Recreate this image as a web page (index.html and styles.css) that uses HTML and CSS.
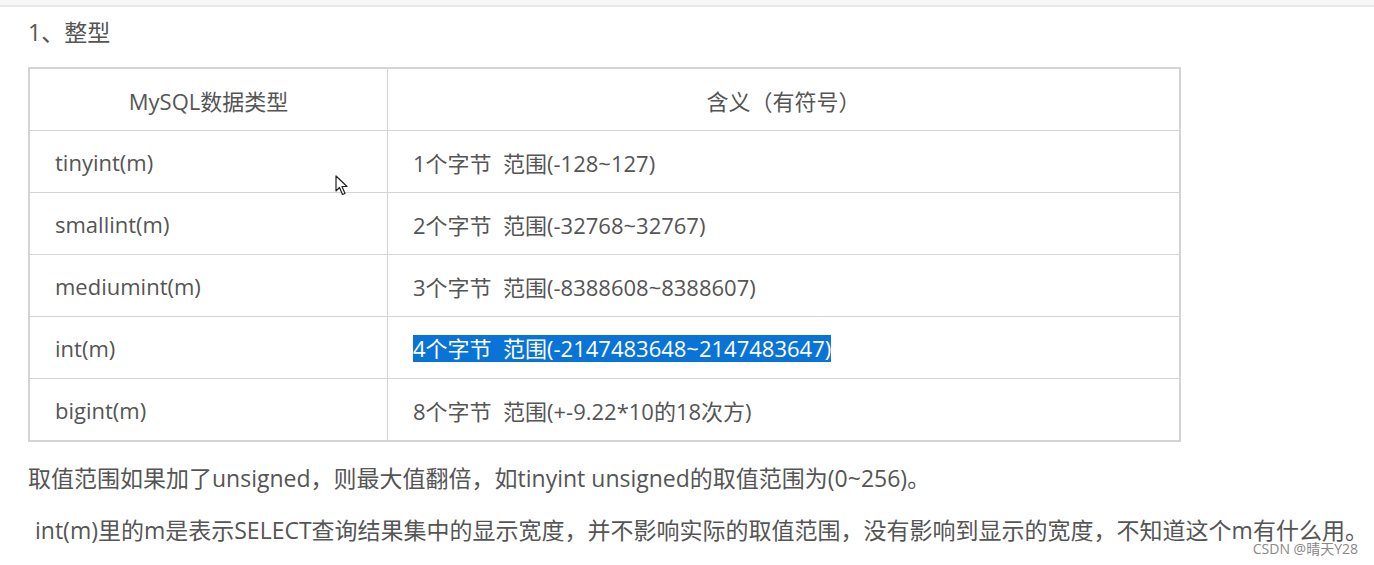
FILE: index.html
```html
<!DOCTYPE html>
<html lang="zh-CN">
<head>
  <meta charset="UTF-8" />
  <meta name="viewport" content="width=device-width, initial-scale=1.0" />
  <title>MySQL 整型</title>
  <link rel="stylesheet" href="styles.css">
</head>
<body>
  <div class="topbar"></div>
  <div class="article">
    <p class="heading">1、整型</p>
    <table class="types">
      <tr>
        <th class="col-type">MySQL数据类型</th>
        <th>含义（有符号）</th>
      </tr>
      <tr>
        <td>tinyint(m)</td>
        <td>1个字节&nbsp; 范围(-128~127)</td>
      </tr>
      <tr>
        <td>smallint(m)</td>
        <td>2个字节&nbsp; 范围(-32768~32767)</td>
      </tr>
      <tr>
        <td>mediumint(m)</td>
        <td>3个字节&nbsp; 范围(-8388608~8388607)</td>
      </tr>
      <tr>
        <td>int(m)</td>
        <td><span class="selected">4个字节&nbsp; 范围(-2147483648~2147483647)</span></td>
      </tr>
      <tr>
        <td>bigint(m)</td>
        <td>8个字节&nbsp; 范围(+-9.22*10的18次方)</td>
      </tr>
    </table>
    <p class="note">取值范围如果加了unsigned，则最大值翻倍，如tinyint unsigned的取值范围为(0~256)。</p>
    <p class="note indent">int(m)里的m是表示SELECT查询结果集中的显示宽度，并不影响实际的取值范围，没有影响到显示的宽度，不知道这个m有什么用。</p>
  </div>
  <div class="watermark">CSDN @晴天Y28</div>
  <svg class="cursor" width="14" height="22" viewBox="0 0 14 22">
    <path d="M1 1 L1 16 L4.5 12.5 L7.5 19.5 L10 18.5 L7 11.5 L12 11.5 Z" fill="#fff" stroke="#222" stroke-width="1.2" stroke-linejoin="round"/>
  </svg>
</body>
</html>
```

FILE: styles.css
```css
body {
  font-family: "Open Sans", "Noto Sans CJK SC", sans-serif;
  background-color: #fff;
  color: #555;
  margin: 0;
  position: relative;
  min-height: 565px;
  overflow: hidden;
}
.topbar {
  height: 5px;
  background-color: #f7f7f7;
  border-bottom: 2px solid #e8e8e8;
}
.article {
  padding: 0 28px;
}
.heading {
  font-size: 23px;
  margin: 12px 0 22px;
  line-height: 26px;
}
.types {
  border-collapse: collapse;
  width: 1153px;
  font-size: 22px;
  border: 2px solid #d4d4d4;
}
.types th, .types td {
  border: 1px solid #d4d4d4;
  height: 61px;
  padding: 0 0 0 25px;
  text-align: left;
  font-weight: normal;
}
.types th {
  text-align: center;
  padding: 0;
}
.col-type {
  width: 357px;
}
.selected {
  display: inline-block;
  line-height: 27px;
  background-color: #0a74d6;
  color: #fff;
}
.note {
  font-size: 23px;
  margin: 23px 0 0;
  line-height: 26px;
  white-space: nowrap;
}
.note.indent {
  margin-top: 26px;
  padding-left: 7px;
}
.watermark {
  position: absolute;
  right: 16px;
  top: 542px;
  font-size: 14px;
  line-height: 14px;
  color: #888;
}
.cursor {
  position: absolute;
  left: 335px;
  top: 175px;
}
```
